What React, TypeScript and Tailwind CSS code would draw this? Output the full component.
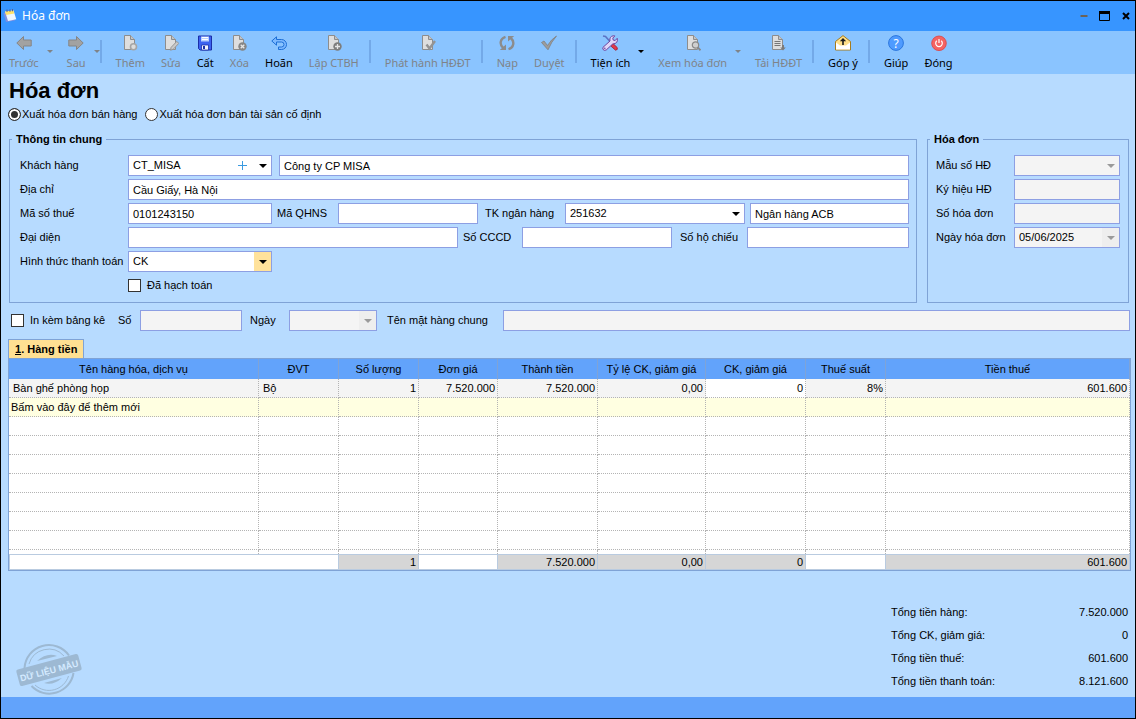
import { useState } from 'react';
import type { ReactNode } from 'react';

const DOC = 'M2.5 .5h6l4 4v10h-10z';

function Doc({ children }: { children?: ReactNode }) {
  return (
    <>
      <path d={DOC} fill="#dedede" stroke="#8d8d8d" />
      <path d="M8.5 .5v4h4" fill="#c4c4c4" stroke="#8d8d8d" />
      {children}
    </>
  );
}

const icons: Record<string, ReactNode> = {
  prev: <path d="M.8 8 7.5 1.5V5h7.7v6H7.5v3.5z" fill="#a2a2a2" stroke="#858585" />,
  next: <path d="M15.2 8 8.5 1.5V5H.8v6h7.7v3.5z" fill="#a2a2a2" stroke="#858585" />,
  add: (
    <Doc>
      <circle cx="11.5" cy="11.8" r="3" fill="#dcdcdc" stroke="#a5a5a5" strokeWidth="1.6" />
    </Doc>
  ),
  edit: (
    <Doc>
      <path d="m7.5 15.2.6-2.8 5.7-6 2 2-5.7 6z" fill="#c9c9c9" stroke="#949494" />
    </Doc>
  ),
  save: (
    <>
      <path d="M1.5 1h13v14H3l-1.5-1.5z" fill="#3c62f0" stroke="#1b2fa8" />
      <path d="M4 1.5h8v5H4z" fill="#b9d0ff" />
      <path d="M5 2.5h6M5 4.5h6" stroke="#fff" />
      <path d="M4.5 10h7v5h-7z" fill="#f2f5ff" stroke="#1b2fa8" strokeWidth=".8" />
      <path d="M6 11h2v3H6z" fill="#1b2fa8" />
    </>
  ),
  remove: (
    <Doc>
      <circle cx="11.5" cy="11.5" r="4.2" fill="#858585" />
      <path d="m9.7 9.7 3.6 3.6m0-3.6-3.6 3.6" stroke="#e6e6e6" strokeWidth="1.3" />
    </Doc>
  ),
  undo: (
    <path
      d="M.8 6 5.5 1.8v2.7h5a4.9 4.9 0 0 1 0 10h-3V12h3a2.5 2.5 0 0 0 0-5h-5v3.2z"
      fill="#7db9ff"
      stroke="#1d6fd6"
      strokeLinejoin="round"
    />
  ),
  create: (
    <Doc>
      <circle cx="11.5" cy="11.5" r="4.2" fill="#7d7d7d" />
      <path d="M11.5 9v5M9 11.5h5" stroke="#e6e6e6" strokeWidth="1.3" />
    </Doc>
  ),
  publish: (
    <Doc>
      <path d="m6.5 9.5 3 4 5.5-7.5" fill="none" stroke="#939393" strokeWidth="2.4" />
    </Doc>
  ),
  reload: (
    <g fill="none" stroke="#8c8c8c" strokeWidth="2.4">
      <path d="M6.5 1.8C1 3.5.2 9.5 4.2 13" />
      <path d="M9.5 14.2c5.5-1.7 6.3-7.7 2.3-11.2" />
      <path d="M.8 15H7V9.5zM15.2 1H9v5.5z" fill="#8c8c8c" stroke="none" />
    </g>
  ),
  approve: (
    <path d="M.5 7.5 3 6l3.5 4.5Q10 4.5 15.5 1 10.5 6.5 7 14.8z" fill="#9c9c9c" stroke="#808080" strokeWidth=".8" />
  ),
  tools: (
    <>
      <path d="m1 1 2.5.5L8 6.5" fill="none" stroke="#5b73c4" strokeWidth="1.6" />
      <path d="m9.5 9.5 1.5-1 4.2 4q1 2.5-1.7 2.7l-4.5-4z" fill="#e2394a" stroke="#9c1f35" strokeWidth=".8" />
      <path
        d="M1 12.3 8 6Q7 1.5 11.5.7l1.3.2-2 2.2.4 2 2 .4 2-2.2q1.3 5.2-4.5 5.7L4.2 15Q2 16 .8 14.2z"
        fill="#e0d6f8"
        stroke="#6e459e"
      />
      <circle cx="2.8" cy="13.3" r=".8" fill="#6e459e" />
    </>
  ),
  view: (
    <Doc>
      <circle cx="10.5" cy="10" r="3.2" fill="#cfcfcf" stroke="#888" strokeWidth="1.2" />
      <path d="m12.8 12.3 2.7 3" stroke="#888" strokeWidth="1.8" />
    </Doc>
  ),
  download: (
    <Doc>
      <path d="M4.5 6.5h6M4.5 8.5h6M4.5 10.5h6" stroke="#777" />
      <path d="M12 10h2v2.5h1.8L13 15.5l-2.8-3H12z" fill="#7b7b7b" />
    </Doc>
  ),
  feedback: (
    <>
      <path d="M.5 6.5 8 .6l7.5 5.9V15H.5z" fill="#ffe08a" stroke="#a67c1e" />
      <path d="M1 7.5 5 10.5h6l4-3v7H1z" fill="#fff" />
      <path d="M8 3 4.8 6.2h2.4V10h1.6V6.2h2.4z" fill="#1c1c1c" />
    </>
  ),
  help: (
    <>
      <circle cx="8" cy="8" r="7.4" fill="#4f9bff" stroke="#2b76dd" />
      <text x="8" y="12.5" textAnchor="middle" fontSize="12" fill="#fff" fontFamily="Noto Sans, sans-serif">
        ?
      </text>
    </>
  ),
  close: (
    <>
      <circle cx="8" cy="8.3" r="7.3" fill="#f46363" stroke="#dd4040" strokeWidth=".8" />
      <path d="M5.8 5.8a3.3 3.3 0 1 0 4.4 0M8 4v4" fill="none" stroke="#fff" strokeWidth="1.2" />
    </>
  ),
};

type Tool = { id: string; label: string; off?: boolean; menu?: boolean };

const toolGroups: Tool[][] = [
  [
    { id: 'prev', label: 'Trước', off: true, menu: true },
    { id: 'next', label: 'Sau', off: true, menu: true },
  ],
  [
    { id: 'add', label: 'Thêm', off: true },
    { id: 'edit', label: 'Sửa', off: true },
    { id: 'save', label: 'Cất' },
    { id: 'remove', label: 'Xóa', off: true },
    { id: 'undo', label: 'Hoãn' },
    { id: 'create', label: 'Lập CTBH', off: true },
  ],
  [{ id: 'publish', label: 'Phát hành HĐĐT', off: true }],
  [
    { id: 'reload', label: 'Nạp', off: true },
    { id: 'approve', label: 'Duyệt', off: true },
  ],
  [
    { id: 'tools', label: 'Tiện ích', menu: true },
    { id: 'view', label: 'Xem hóa đơn', off: true, menu: true },
    { id: 'download', label: 'Tải HĐĐT', off: true },
  ],
  [{ id: 'feedback', label: 'Góp ý' }],
  [
    { id: 'help', label: 'Giúp' },
    { id: 'close', label: 'Đóng' },
  ],
];

function Caret({ className = '' }: { className?: string }) {
  return (
    <svg viewBox="0 0 8 4" className={`h-1 w-2 fill-current ${className}`}>
      <path d="M0 0h8L4 4z" />
    </svg>
  );
}

function Toolbar() {
  return (
    <div className="flex h-[43px] items-start bg-[#8ac4ff] font-['Noto_Sans',sans-serif] text-[11px]">
      {toolGroups.map((group, i) => (
        <div key={i} className="flex items-start">
          {i > 0 && <span className="mt-[9px] mr-1.5 ml-0.5 h-[23px] w-0.5 bg-[#73a9e8]" />}
          {group.map((tool, j) => (
            <div key={tool.id} className={`flex ${tool.off ? 'text-[#7f8388]' : 'text-black'}`}>
              <button type="button" disabled={tool.off} className="flex flex-col items-center gap-1 px-2 pt-1 leading-4 whitespace-nowrap">
                <svg viewBox="0 0 16 16" className="size-4">
                  {icons[tool.id]}
                </svg>
                {tool.label}
              </button>
              {tool.menu && (
                <button
                  type="button"
                  disabled={tool.off}
                  aria-label={tool.label}
                  className={j < group.length - 1 ? 'w-3' : 'w-1'}
                >
                  <svg viewBox="0 0 6 3" className="h-[3px] w-1.5 max-w-none fill-current">
                    <path d="M0 0h6L3 3z" />
                  </svg>
                </button>
              )}
            </div>
          ))}
        </div>
      ))}
    </div>
  );
}

const inputBase = 'h-[21px] min-w-0 border border-[#8d9fe3] px-1 text-[11px] outline-none';
const inputOn = 'bg-white text-black';
const inputOff = 'bg-[#f4f4f4] text-black';

type FieldProps = { id: string; label: string; value?: string; className?: string; off?: boolean; hideLabel?: boolean; labelClass?: string };

function Field({ id, label, value = '', className = '', off, hideLabel, labelClass = '' }: FieldProps) {
  return (
    <>
      {!hideLabel && (
        <label htmlFor={id} className={`shrink-0 whitespace-nowrap ${labelClass}`}>
          {label}
        </label>
      )}
      <input
        id={id}
        type="text"
        aria-label={hideLabel ? label : undefined}
        defaultValue={value}
        disabled={off}
        className={`${inputBase} ${off ? inputOff : inputOn} ${className}`}
      />
    </>
  );
}

type PickerProps = FieldProps & { arrow?: string; extra?: ReactNode };

function Picker({ id, label, value = '', className = '', off, labelClass = '', arrow = '', extra }: PickerProps) {
  return (
    <>
      <label htmlFor={id} className={`shrink-0 whitespace-nowrap ${labelClass}`}>
        {label}
      </label>
      <div className={`relative h-[21px] shrink-0 ${className}`}>
        <select id={id} disabled={off} className={`${inputBase} w-full appearance-none opacity-100 ${off ? inputOff : inputOn}`}>
          <option>{value}</option>
        </select>
        {extra}
        <span
          className={`pointer-events-none absolute inset-y-px right-px flex w-[17px] items-center justify-center ${
            off ? 'text-[#9a9a9a]' : 'text-black'
          } ${arrow}`}
        >
          <Caret />
        </span>
      </div>
    </>
  );
}

const checkbox = 'size-[13px] shrink-0 appearance-none border border-[#333] bg-white checked:bg-[#333]';
const radio =
  'size-[13px] shrink-0 appearance-none rounded-full border border-[#333] bg-white checked:bg-[#333] checked:shadow-[inset_0_0_0_2px_white]';
const labelCol = 'w-[108px]';

function GeneralInfo() {
  return (
    <fieldset className="min-w-0 flex-1 border border-[#7fa3d6] pr-[7px] pb-[9px] pl-2.5">
      <legend className="-ml-2 px-1 leading-4 font-bold">Thông tin chung</legend>
      <div className="flex flex-col gap-[3px] pt-2">
        <div className="flex items-center">
          <Picker
            id="customer"
            label="Khách hàng"
            value="CT_MISA"
            labelClass={labelCol}
            className="w-36"
            extra={
              <button type="button" aria-label="Thêm khách hàng" className="absolute inset-y-px right-6 flex w-3 items-center justify-center">
                <svg viewBox="0 0 9 9" className="size-[9px] stroke-[#3a9ae0]">
                  <path d="M4.5 0v9M0 4.5h9" />
                </svg>
              </button>
            }
          />
          <Field id="customerName" label="Tên khách hàng" hideLabel value="Công ty CP MISA" className="ml-[7px] flex-1" />
        </div>
        <div className="flex items-center">
          <Field id="address" label="Địa chỉ" value="Cầu Giấy, Hà Nội" labelClass={labelCol} className="flex-1" />
        </div>
        <div className="flex items-center">
          <Field id="taxCode" label="Mã số thuế" value="0101243150" labelClass={labelCol} className="w-36" />
          <Field id="qhns" label="Mã QHNS" labelClass="w-[66px] pl-[5px]" className="w-[140px]" />
          <Picker id="bankAccount" label="TK ngân hàng" value="251632" labelClass="w-[87px] pl-[7px]" className="w-[180px]" />
          <Field id="bankName" label="Tên ngân hàng" hideLabel value="Ngân hàng ACB" className="ml-[5px] flex-1" />
        </div>
        <div className="flex items-center">
          <Field id="representative" label="Đại diện" labelClass={labelCol} className="w-[330px]" />
          <Field id="cccd" label="Số CCCD" labelClass="w-16 pl-[5px]" className="w-[150px]" />
          <Field id="passport" label="Số hộ chiếu" labelClass="w-[75px] pl-2" className="flex-1" />
        </div>
        <div className="flex items-center">
          <Picker
            id="payment"
            label="Hình thức thanh toán"
            value="CK"
            labelClass={labelCol}
            className="w-36"
            arrow="bg-[#ffe29b]"
          />
        </div>
        <label className="mt-0.5 ml-[108px] flex h-4 items-center gap-1.5">
          <input type="checkbox" className={checkbox} />
          Đã hạch toán
        </label>
      </div>
    </fieldset>
  );
}

function InvoiceInfo() {
  return (
    <fieldset className="w-[202px] min-w-0 shrink-0 border border-[#7fa3d6] px-2">
      <legend className="-ml-1.5 px-1 leading-4 font-bold">Hóa đơn</legend>
      <div className="flex flex-col gap-[3px] pt-2">
        <div className="flex items-center">
          <Picker id="template" label="Mẫu số HĐ" off labelClass="w-[78px]" className="w-[106px]" />
        </div>
        <div className="flex items-center">
          <Field id="symbol" label="Ký hiệu HĐ" off labelClass="w-[78px]" className="w-[106px]" />
        </div>
        <div className="flex items-center">
          <Field id="number" label="Số hóa đơn" off labelClass="w-[78px]" className="w-[106px]" />
        </div>
        <div className="flex items-center">
          <Picker id="date" label="Ngày hóa đơn" value="05/06/2025" off labelClass="w-[78px]" className="w-[106px]" arrow="bg-[#eee]" />
        </div>
      </div>
    </fieldset>
  );
}

type Column = { title: string; width: string; value: string; total?: string; left?: boolean; editable?: boolean };

const columns: Column[] = [
  { title: 'Tên hàng hóa, dịch vụ', width: 'w-[250px]', value: 'Bàn ghế phòng họp', left: true },
  { title: 'ĐVT', width: 'w-20', value: 'Bộ', left: true },
  { title: 'Số lượng', width: 'w-20', value: '1', total: '1' },
  { title: 'Đơn giá', width: 'w-[79px]', value: '7.520.000' },
  { title: 'Thành tiền', width: 'w-[100px]', value: '7.520.000', total: '7.520.000' },
  { title: 'Tỷ lệ CK, giảm giá', width: 'w-[108px]', value: '0,00', total: '0,00' },
  { title: 'CK, giảm giá', width: 'w-[100px]', value: '0', total: '0', editable: true },
  { title: 'Thuế suất', width: 'w-20', value: '8%' },
  { title: 'Tiền thuế', width: '', value: '601.600', total: '601.600' },
];

const cell = 'border-r border-b border-dotted border-[#b4b4b4] p-0 leading-4 whitespace-nowrap';

function ItemsTable() {
  return (
    <table className="w-full table-fixed border-separate border-spacing-0 border border-[#7fa3d6] bg-white">
      <thead>
        <tr className="h-5 bg-[#62a3fb]">
          {columns.map(col => (
            <th key={col.title} className={`${col.width} border-r border-[#7fa3d6] p-0 leading-4 font-normal whitespace-nowrap`}>
              {col.title}
            </th>
          ))}
        </tr>
      </thead>
      <tbody>
        <tr className="h-[19px]">
          {columns.map(col => (
            <td key={col.title} className={`${cell} ${col.editable ? 'bg-white' : 'bg-[#f4f4f4]'} ${col.left ? 'pl-1' : 'pr-0.5 text-right'}`}>
              {col.value}
            </td>
          ))}
        </tr>
        <tr className="h-[19px] bg-[#ffffe1]">
          {columns.map((col, i) => (
            <td key={col.title} className={`${cell} pl-0.5`}>
              {i === 0 && 'Bấm vào đây để thêm mới'}
            </td>
          ))}
        </tr>
        {[1, 2, 3, 4, 5, 6, 7].map(n => (
          <tr key={n} className="h-[19px]">
            {columns.map(col => (
              <td key={col.title} className={cell} />
            ))}
          </tr>
        ))}
        <tr className="h-1">
          {columns.map(col => (
            <td key={col.title} className="border-r border-dotted border-[#b4b4b4] p-0" />
          ))}
        </tr>
      </tbody>
      <tfoot>
        <tr className="h-4">
          <td colSpan={2} className="border border-[#b9cbe0] p-0" />
          {columns.slice(2).map(col => (
            <td
              key={col.title}
              className={`border-y border-r border-[#b9cbe0] p-0 pr-0.5 text-right leading-[14px] ${col.total ? 'bg-[#d6d6d6]' : 'bg-white'}`}
            >
              {col.total}
            </td>
          ))}
        </tr>
      </tfoot>
    </table>
  );
}

function Stamp() {
  return (
    <svg viewBox="0 0 68 54" className="h-[54px] w-[68px]">
      <g fill="none" stroke="#9db9d3">
        <path d="M9.5 25A24.5 24.5 0 0 1 54 12.5M16.5 43A24.5 24.5 0 0 0 58.5 30" strokeWidth="2" />
        <path d="M14 21A20.5 20.5 0 0 1 49 13M20 42A20.5 20.5 0 0 0 53.5 33" />
      </g>
      <path d="M22 18q10-9 20-5zM29 40q9 3 18-5z" fill="#9db9d3" />
      <g transform="rotate(-15 34 27)">
        <rect x="2" y="18.5" width="64" height="17" rx="2" fill="#9db9d3" />
        <text x="34" y="31" textAnchor="middle" fontSize="9" fontWeight="bold" fill="#d4eaff" fontFamily="Liberation Sans, sans-serif">
          DỮ LIỆU MẪU
        </text>
      </g>
    </svg>
  );
}

const totals = [
  ['Tổng tiền hàng:', '7.520.000'],
  ['Tổng CK, giảm giá:', '0'],
  ['Tổng tiền thuế:', '601.600'],
  ['Tổng tiền thanh toán:', '8.121.600'],
];

export default function App() {
  const [kind, setKind] = useState('goods');

  return (
    <div className="flex min-h-screen flex-col border border-black bg-[#b7dbff] font-['Liberation_Sans',Arial,sans-serif] text-[11px] text-black">
      <header className="flex h-[30px] items-center bg-[#3795ff] pr-[5px] pl-0.5">
        <svg viewBox="0 0 14 14" className="size-3.5">
          <path d="M.5 4 3 13l9-1.5L9 2z" fill="#7d8fe0" />
          <path d="m2 2.5 8.5-1 2.8 8.7L5 12z" fill="#eef7ff" />
          <path d="m2 2.5 8.5-1 .8 3L3 6z" fill="#ffe36b" />
          <path d="M4 .5V3M7 .3v2.5M9.5 0v2.3" stroke="#5a5f8c" />
        </svg>
        <span className="ml-[5px] flex-1 font-['Noto_Sans',sans-serif] text-xs text-white">Hóa đơn</span>
        <div className="flex items-center gap-[11px]">
          <button type="button" aria-label="Thu nhỏ">
            <svg viewBox="0 0 8 10" className="h-2.5 w-2">
              <path d="M.5 4h7v2h-7z" fill="#6b6257" />
            </svg>
          </button>
          <button type="button" aria-label="Phóng to">
            <svg viewBox="0 0 12 10" className="h-2.5 w-3">
              <path d="M.5 .5h10v9H.5z" fill="none" stroke="#000" />
              <path d="M0 0h11v3H0z" />
            </svg>
          </button>
          <button type="button" aria-label="Đóng cửa sổ">
            <svg viewBox="0 0 8 8" className="size-2 stroke-black stroke-2">
              <path d="m1 1 6 6m0-6L1 7" />
            </svg>
          </button>
        </div>
      </header>

      <Toolbar />

      <main className="flex flex-1 flex-col pr-1 pl-[7px]">
        <h1 className="pt-[5px] pl-px text-[22px] leading-6 font-bold">Hóa đơn</h1>
        <div className="mt-[3px] flex h-4 items-center gap-2">
          <label className="flex items-center gap-px">
            <input type="radio" name="kind" checked={kind === 'goods'} onChange={() => setKind('goods')} className={radio} />
            Xuất hóa đơn bán hàng
          </label>
          <label className="flex items-center gap-px">
            <input type="radio" name="kind" checked={kind === 'assets'} onChange={() => setKind('assets')} className={radio} />
            Xuất hóa đơn bán tài sản cố định
          </label>
        </div>

        <div className="mt-[9px] flex gap-2.5 pr-0.5 pl-px">
          <GeneralInfo />
          <InvoiceInfo />
        </div>

        <div className="mt-[7px] flex items-center pr-px pl-[3px]">
          <label className="flex w-[107px] items-center gap-1.5 whitespace-nowrap">
            <input type="checkbox" className={checkbox} />
            In kèm bảng kê
          </label>
          <Field id="listNo" label="Số" off labelClass="w-[22px]" className="w-[102px]" />
          <Picker id="listDate" label="Ngày" off labelClass="w-[47px] pl-2" className="w-[88px]" arrow="bg-[#eee]" />
          <Field id="commonName" label="Tên mặt hàng chung" off labelClass="w-[126px] pl-2.5" className="flex-1" />
        </div>

        <div role="tablist" className="mt-2 flex">
          <button
            type="button"
            role="tab"
            aria-selected="true"
            className="h-[19px] border border-b-0 border-[#7fa3d6] bg-[#ffe092] px-1.5 font-bold"
          >
            <u>1</u>. Hàng tiền
          </button>
        </div>
        <ItemsTable />

        <div className="flex flex-1 items-end justify-between pr-[3px] pl-[7px]">
          <Stamp />
          <dl className="flex w-[237px] flex-col gap-[7px] pt-8 pb-2">
            {totals.map(([label, value]) => (
              <div key={label} className="flex justify-between leading-4">
                <dt>{label}</dt>
                <dd>{value}</dd>
              </div>
            ))}
          </dl>
        </div>
      </main>

      <footer className="h-[21px] bg-[#62a3fb]" />
    </div>
  );
}
